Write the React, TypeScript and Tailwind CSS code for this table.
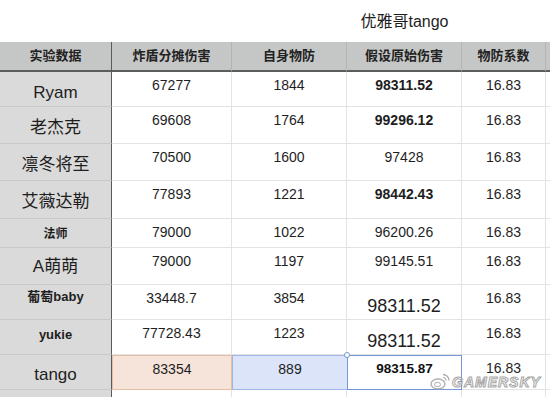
import React from 'react';

type Row = {
  name: string;
  nameCls: string;
  h: string;
  a: string;
  b: string;
  c: string;
  cKind: 'bold' | 'plain' | 'big';
};

const rows: Row[] = [
  { name: 'Ryam', nameCls: 'text-[17px] leading-[20px] pt-[11px]', h: 'h-[35px]', a: '67277', b: '1844', c: '98311.52', cKind: 'bold' },
  { name: '老杰克', nameCls: 'text-[17px] leading-[20px] pt-[11px]', h: 'h-[37px]', a: '69608', b: '1764', c: '99296.12', cKind: 'bold' },
  { name: '凛冬将至', nameCls: 'text-[17px] leading-[20px] pt-[11px]', h: 'h-[37px]', a: '70500', b: '1600', c: '97428', cKind: 'plain' },
  { name: '艾薇达勒', nameCls: 'text-[17px] leading-[20px] pt-[11px]', h: 'h-[38px]', a: '77893', b: '1221', c: '98442.43', cKind: 'bold' },
  { name: '法师', nameCls: 'text-[12px] leading-[16px] pt-[7px] font-bold', h: 'h-[29px]', a: '79000', b: '1022', c: '96200.26', cKind: 'plain' },
  { name: 'A萌萌', nameCls: 'text-[17px] leading-[20px] pt-[9px]', h: 'h-[37px]', a: '79000', b: '1197', c: '99145.51', cKind: 'plain' },
  { name: '葡萄baby', nameCls: 'text-[13px] leading-[16px] pt-[4px] font-bold', h: 'h-[35px]', a: '33448.7', b: '3854', c: '98311.52', cKind: 'big' },
  { name: 'yukie', nameCls: 'text-[13px] leading-[16px] pt-[7px] font-bold', h: 'h-[35px]', a: '77728.43', b: '1223', c: '98311.52', cKind: 'big' },
];

const headers = ['实验数据', '炸盾分摊伤害', '自身物防', '假设原始伤害', '物防系数'];

const font = "font-['Liberation_Sans','Noto_Sans_CJK_SC',sans-serif]";
const cell = 'border-r border-b border-[#e3e3e3] bg-white text-center text-[14px] leading-[16px] pt-[5px] text-[#1e1e1e]';
const nameCell = 'border-r-[1.5px] border-r-[#5a5a5a] border-b border-b-[#c9c9c9] bg-[#dadada] text-center text-[#1e1e1e]';

function cKindCls(k: Row['cKind']) {
  if (k === 'bold') return 'font-bold text-[13.5px]';
  if (k === 'big') return 'text-[18px] leading-[22px] pt-[10px]';
  return 'text-[14px]';
}

export default function App() {
  return (
    <div className={`relative w-[550px] h-[397px] overflow-hidden bg-white ${font}`}>
      <div className="grid grid-cols-[112px_120px_115px_115px_84px_4px] h-[42px]">
        <div className="col-start-4 flex items-center justify-center pt-[2px] text-[16px] text-[#1e1e1e] whitespace-nowrap">
          优雅哥tango
        </div>
      </div>

      <div className="grid grid-cols-[112px_120px_115px_115px_84px_4px]">
        {headers.map((t, i) => (
          <div
            key={t}
            className={`h-[30px] flex items-center justify-center bg-[#c5c7c6] border-b-2 border-b-[#5c5c5c] text-[13px] font-bold text-[#222] ${
              i === 0 ? 'border-r-[1.5px] border-r-[#5a5a5a]' : 'border-r border-r-[#b3b5b4]'
            }`}
          >
            {t}
          </div>
        ))}
        <div className="h-[30px] bg-[#c5c7c6] border-b-2 border-b-[#5c5c5c]" />

        {rows.map((r) => (
          <React.Fragment key={r.name}>
            <div className={`${r.h} ${nameCell} ${r.nameCls}`}>{r.name}</div>
            <div className={`${r.h} ${cell}`}>{r.a}</div>
            <div className={`${r.h} ${cell}`}>{r.b}</div>
            <div className={`${r.h} ${cell} ${cKindCls(r.cKind)}`}>{r.c}</div>
            <div className={`${r.h} ${cell}`}>16.83</div>
            <div className={`${r.h} border-b border-[#e3e3e3] bg-white`} />
          </React.Fragment>
        ))}

        {/* tango row with selection */}
        <div className={`h-[35px] ${nameCell} text-[17px] leading-[20px] pt-[10px]`}>tango</div>
        <div className="h-[35px] bg-[#f6e3d9] border border-[#e6bda6] text-center text-[14px] leading-[16px] pt-[5px] text-[#1e1e1e]">83354</div>
        <div className="h-[35px] bg-[#dbe4f8] border-y border-l border-[#9fb6e6] text-center text-[14px] leading-[16px] pt-[5px] text-[#1e1e1e]">889</div>
        <div className="relative h-[35px] bg-white border-[1.5px] border-[#7597d8] text-center font-bold text-[13.5px] leading-[16px] pt-[5px] text-[#111]">
          98315.87
          <span className="absolute -left-[4px] -top-[4px] w-[6px] h-[6px] rounded-full bg-white border border-[#7597d8]" />
        </div>
        <div className={`h-[35px] ${cell}`}>16.83</div>
        <div className="h-[35px] border-b border-[#e3e3e3] bg-white" />

        <div className={`h-[10px] ${nameCell}`} />
        <div className={`h-[10px] ${cell}`} />
        <div className={`h-[10px] ${cell}`} />
        <div className={`h-[10px] ${cell}`} />
        <div className={`h-[10px] ${cell}`} />
        <div className="h-[10px] bg-white" />
      </div>

      {/* watermark */}
      <div className="absolute left-[430px] top-[373px] flex items-center gap-[1px] opacity-80">
        <svg width="21" height="17" viewBox="0 0 21 17">
          <ellipse cx="8" cy="11" rx="7" ry="5" fill="white" stroke="#9a9a9a" strokeWidth="1.3" />
          <ellipse cx="7.5" cy="11.5" rx="3" ry="2.2" fill="none" stroke="#9a9a9a" strokeWidth="1" />
          <path d="M13 1.5 A6 6 0 0 1 19 7.5" fill="none" stroke="#9a9a9a" strokeWidth="1.3" />
          <path d="M13 4.5 A3 3 0 0 1 16 7.5" fill="none" stroke="#9a9a9a" strokeWidth="1.1" />
        </svg>
        <span className="text-[14px] leading-[16px] font-bold italic tracking-[1px] text-white [-webkit-text-stroke:1px_#8f8f8f] whitespace-nowrap">
          GAMERSKY
        </span>
      </div>
    </div>
  );
}
